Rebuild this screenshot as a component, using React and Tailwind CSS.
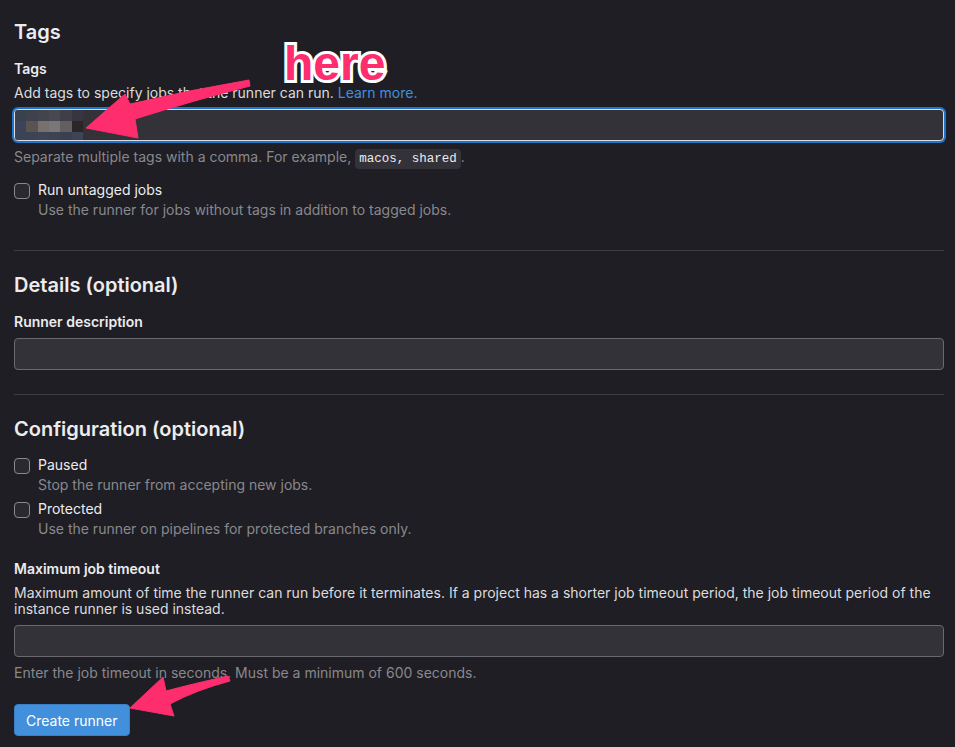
import React from "react";

const MOSAIC = [
  ["#39414f", "#3d424c", "#43454c", "#474850", "#3e3f47", "#363540"],
  ["#3b4457", "#5a5352", "#76716f", "#7a7778", "#635e60", "#2a2628"],
  ["#3b4457", "#3b4354", "#3f4555", "#3e4352", "#3a4050", "#3c4456"],
];

const Checkbox = ({ label, help, className }) => (
  <div className={"flex gap-[8px] " + (className || "")}>
    <div className="mt-[3px] h-[16px] w-[16px] shrink-0 rounded-[4px] border border-[#89888d] bg-[#2a292f]" />
    <div>
      <p className="text-[14px] leading-[20px] text-[#ececef]">{label}</p>
      <p className="text-[14px] leading-[20px] text-[#89888d]">{help}</p>
    </div>
  </div>
);

const TextInput = ({ className }) => (
  <div
    className={
      "h-[32px] w-full rounded-[4px] border border-[#6a696f] bg-[#333238] " +
      (className || "")
    }
  />
);

export default function App() {
  return (
    <div className="relative min-h-screen bg-[#1f1e24] pl-[14px] pr-[11px] pt-[20px] font-['Inter','Noto_Sans',sans-serif] text-[#ececef]">
      {/* Tags */}
      <h2 className="text-[20px] font-semibold leading-[24px]">Tags</h2>
      <p className="mt-[15px] text-[14px] font-semibold leading-[20px]">Tags</p>
      <p className="mt-[4px] text-[14px] leading-[20px] text-[#dcdcde]">
        Add tags to specify jobs that the runner can run.{" "}
        <span className="text-[#428fdc]">Learn more.</span>
      </p>
      <div className="mt-[6px] h-[32px] w-full overflow-hidden rounded-[4px] border border-[#dcdcde] bg-[#333238] ring-2 ring-[#1f75cb]">
        <div className="grid w-[68px] grid-cols-6">
          {MOSAIC.flat().map((c, i) => (
            <div key={i} className="h-[11px]" style={{ backgroundColor: c }} />
          ))}
        </div>
      </div>
      <p className="mt-[6px] text-[14px] leading-[20px] text-[#89888d]">
        Separate multiple tags with a comma. For example,{" "}
        <code className="rounded-[4px] bg-[#333238] px-[4px] py-[3px] font-['Liberation_Mono','DejaVu_Sans_Mono',monospace] text-[12.5px] text-[#ececef]">
          macos, shared
        </code>
        .
      </p>
      <Checkbox
        className="mt-[11px]"
        label="Run untagged jobs"
        help="Use the runner for jobs without tags in addition to tagged jobs."
      />

      <div className="mt-[30px] border-t border-[#3d3c42]" />

      {/* Details */}
      <h2 className="mt-[22px] text-[20px] font-semibold leading-[24px]">Details (optional)</h2>
      <p className="mt-[15px] text-[14px] font-semibold leading-[20px]">Runner description</p>
      <TextInput className="mt-[6px]" />

      <div className="mt-[24px] border-t border-[#3d3c42]" />

      {/* Configuration */}
      <h2 className="mt-[22px] text-[20px] font-semibold leading-[24px]">
        Configuration (optional)
      </h2>
      <Checkbox
        className="mt-[14px]"
        label="Paused"
        help="Stop the runner from accepting new jobs."
      />
      <Checkbox
        className="mt-[4px]"
        label="Protected"
        help="Use the runner on pipelines for protected branches only."
      />

      <p className="mt-[20px] text-[14px] font-semibold leading-[20px]">Maximum job timeout</p>
      <p className="mt-[6px] text-[14px] leading-[16px] text-[#dcdcde]">
        Maximum amount of time the runner can run before it terminates. If a project has a
        shorter job timeout period, the job timeout period of the instance runner is used
        instead.
      </p>
      <TextInput className="mt-[8px]" />
      <p className="mt-[6px] text-[14px] leading-[20px] text-[#89888d]">
        Enter the job timeout in seconds. Must be a minimum of 600 seconds.
      </p>
      <button className="mt-[21px] mb-[10px] h-[32px] rounded-[4px] border border-[#3a7fc8] bg-[#428fdc] px-[11px] text-[14px] text-white">
        Create runner
      </button>

      {/* annotations */}
      <span className="pointer-events-none absolute left-[284px] top-[40px] font-['Liberation_Sans',Arial,sans-serif] text-[48px] font-bold leading-[48px] text-[#fd2d6e] [-webkit-text-stroke:6px_white] [paint-order:stroke_fill]">
        here
      </span>
      <svg
        className="pointer-events-none absolute left-0 top-0"
        width="955"
        height="747"
        viewBox="0 0 955 747"
      >
        <path
          d="M 249 80 Q 190 90 130 104 L 125 94 L 86 128 L 138 138 L 135 119 Q 195 100 250 86 Z"
          fill="#fd2d6e"
          stroke="#fd2d6e"
          strokeWidth="1"
          strokeLinejoin="round"
        />
        <path
          d="M 228 676 Q 192 684 166 691 L 163 677 L 130 708 L 174 716 L 170 704 Q 196 690 230 681 Z"
          fill="#fd2d6e"
          stroke="#fd2d6e"
          strokeWidth="1"
          strokeLinejoin="round"
        />
      </svg>
    </div>
  );
}
